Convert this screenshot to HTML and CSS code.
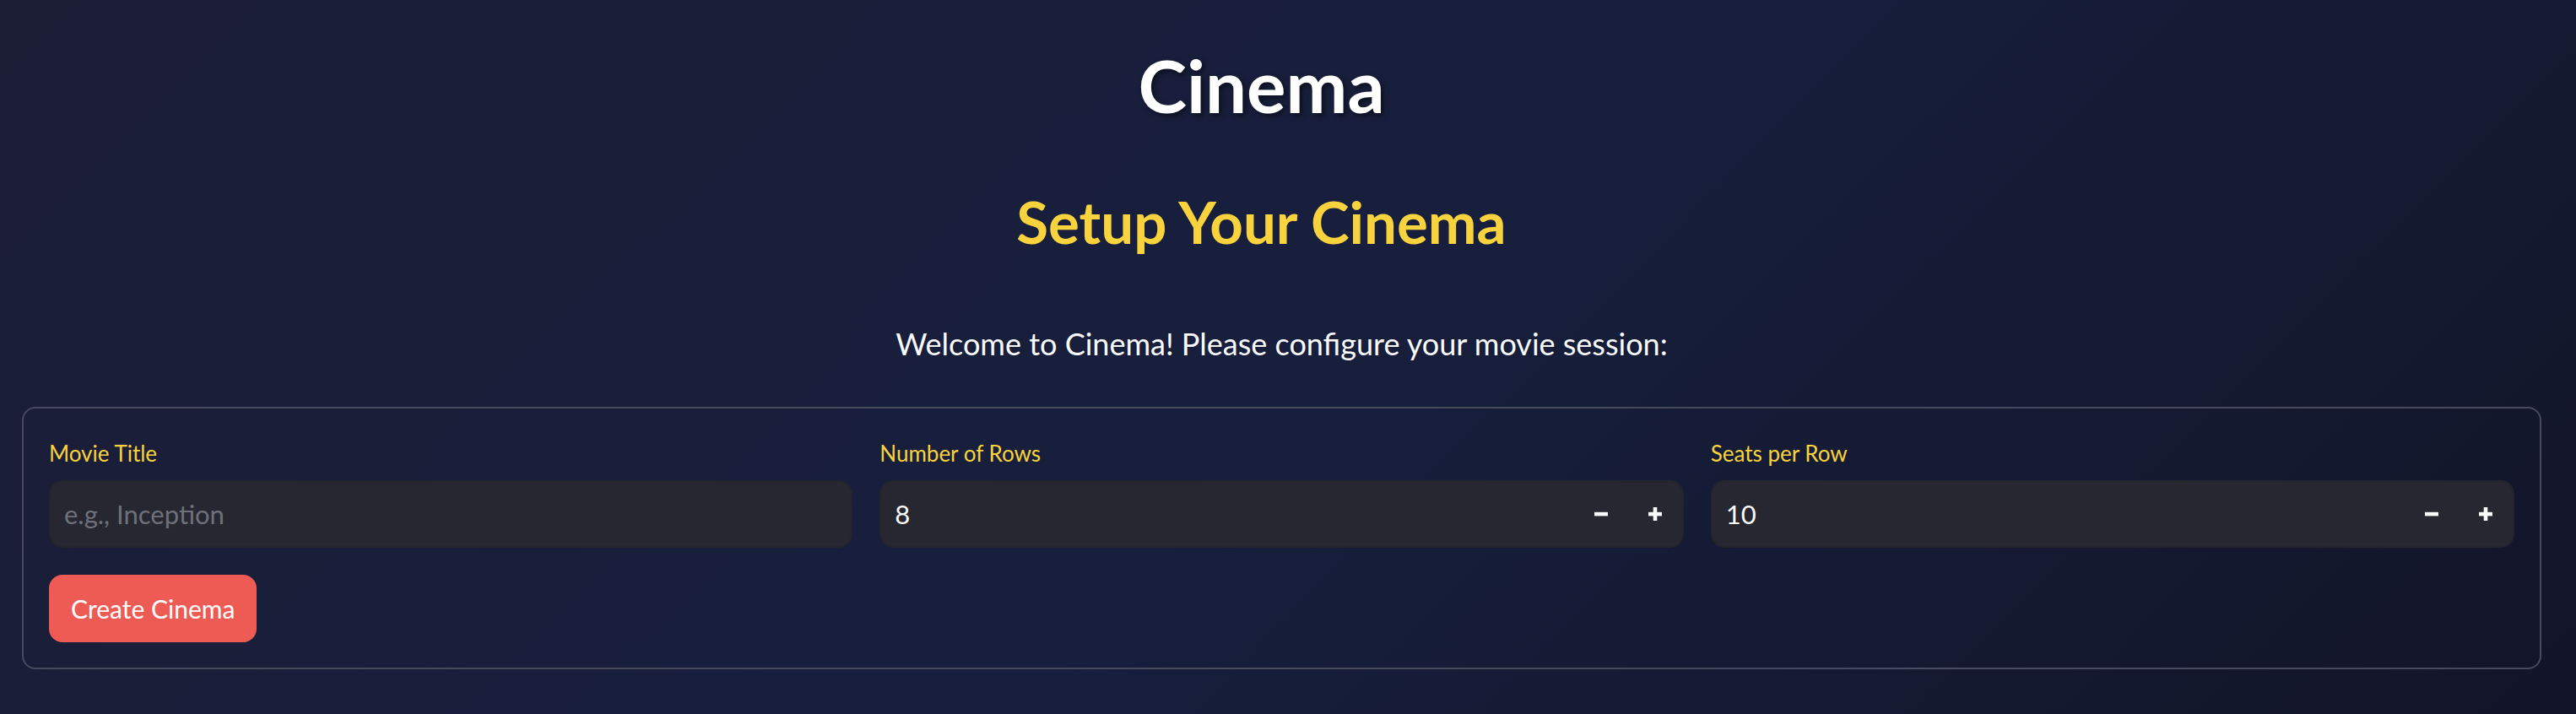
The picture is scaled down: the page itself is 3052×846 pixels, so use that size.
FILE: index.html
```html
<!DOCTYPE html>
<html lang="en">
<head>
<meta charset="utf-8">
<title>Cinema</title>
<link rel="stylesheet" href="styles.css">
</head>
<body>
<div class="app">
  <h1 class="title">Cinema</h1>
  <h2 class="subtitle">Setup Your Cinema</h2>
  <p class="welcome">Welcome to Cinema! Please configure your movie session:</p>
  <form class="setup-box">
    <div class="columns">
      <div class="field">
        <label class="field-label">Movie Title</label>
        <div class="input-wrap">
          <input class="text-input" type="text" placeholder="e.g., Inception">
        </div>
      </div>
      <div class="field">
        <label class="field-label">Number of Rows</label>
        <div class="input-wrap">
          <input class="text-input" type="text" value="8">
          <button type="button" class="step" aria-label="decrement">
            <svg width="16" height="16" viewBox="0 0 16 16"><rect x="0" y="5.8" width="16" height="4.6" fill="#fafafa"/></svg>
          </button>
          <button type="button" class="step" aria-label="increment">
            <svg width="16" height="16" viewBox="0 0 16 16"><rect x="0" y="5.8" width="16" height="4.6" fill="#fafafa"/><rect x="5.7" y="0" width="4.6" height="16" fill="#fafafa"/></svg>
          </button>
        </div>
      </div>
      <div class="field">
        <label class="field-label">Seats per Row</label>
        <div class="input-wrap">
          <input class="text-input" type="text" value="10">
          <button type="button" class="step" aria-label="decrement">
            <svg width="16" height="16" viewBox="0 0 16 16"><rect x="0" y="5.8" width="16" height="4.6" fill="#fafafa"/></svg>
          </button>
          <button type="button" class="step" aria-label="increment">
            <svg width="16" height="16" viewBox="0 0 16 16"><rect x="0" y="5.8" width="16" height="4.6" fill="#fafafa"/><rect x="5.7" y="0" width="4.6" height="16" fill="#fafafa"/></svg>
          </button>
        </div>
      </div>
    </div>
    <div class="actions">
      <button type="button" class="primary">Create Cinema</button>
    </div>
  </form>
</div>
</body>
</html>
```
FILE: styles.css
```css
* { box-sizing: border-box; }

html, body {
  margin: 0;
  height: 100%;
}

body {
  min-height: 846px;
  background: linear-gradient(135deg, #1b1d35 0%, #171f3d 50%, #121528 100%);
  font-family: Lato, "Source Sans Pro", "Noto Sans", sans-serif;
  color: #fafafa;
}

.app {
  padding: 49px 41px 0 26px;
}

.title {
  margin: 0;
  padding-right: 48px;
  text-align: center;
  font-size: 87px;
  font-weight: 700;
  line-height: 1.2;
  color: #ffffff;
  text-shadow: 3px 3px 6px rgba(0, 0, 0, 0.5);
}

.subtitle {
  margin: 69px 0 0 0;
  padding-right: 48px;
  text-align: center;
  font-size: 69px;
  font-weight: 700;
  line-height: 1.2;
  color: #f8d33d;
}

.welcome {
  margin: 81px 0 0 0;
  text-align: center;
  font-size: 36px;
  line-height: 1.2;
  color: #fafafa;
}

.setup-box {
  margin-top: 53px;
  border: 2px solid #474a5e;
  border-radius: 16px;
  padding: 30px;
}

.columns {
  display: grid;
  grid-template-columns: 1fr 1fr 1fr;
  column-gap: 32px;
}

.field {
  display: flex;
  flex-direction: column;
}

.field-label {
  display: block;
  height: 47px;
  margin-bottom: 8px;
  font-size: 26px;
  line-height: 47px;
  color: #f8d33d;
}

.input-wrap {
  display: flex;
  align-items: center;
  height: 80px;
  background: #262730;
  border: 2px solid #23242c;
  border-radius: 16px;
  overflow: hidden;
}

.text-input {
  flex: 1;
  min-width: 0;
  height: 100%;
  border: none;
  outline: none;
  background: transparent;
  padding: 0 16px;
  font-family: inherit;
  font-size: 31px;
  line-height: 76px;
  color: #fafafa;
}

.text-input::placeholder {
  color: #6f717a;
  opacity: 1;
}

.step {
  display: flex;
  align-items: center;
  justify-content: center;
  width: 64px;
  height: 100%;
  padding: 0;
  border: none;
  background: transparent;
}

.step svg {
  display: block;
}

.actions {
  margin-top: 32px;
}

.primary {
  height: 80px;
  padding: 0 26px;
  border: none;
  border-radius: 16px;
  background: #ee5b55;
  color: #ffffff;
  font-family: inherit;
  font-size: 30px;
  line-height: 80px;
}
```
